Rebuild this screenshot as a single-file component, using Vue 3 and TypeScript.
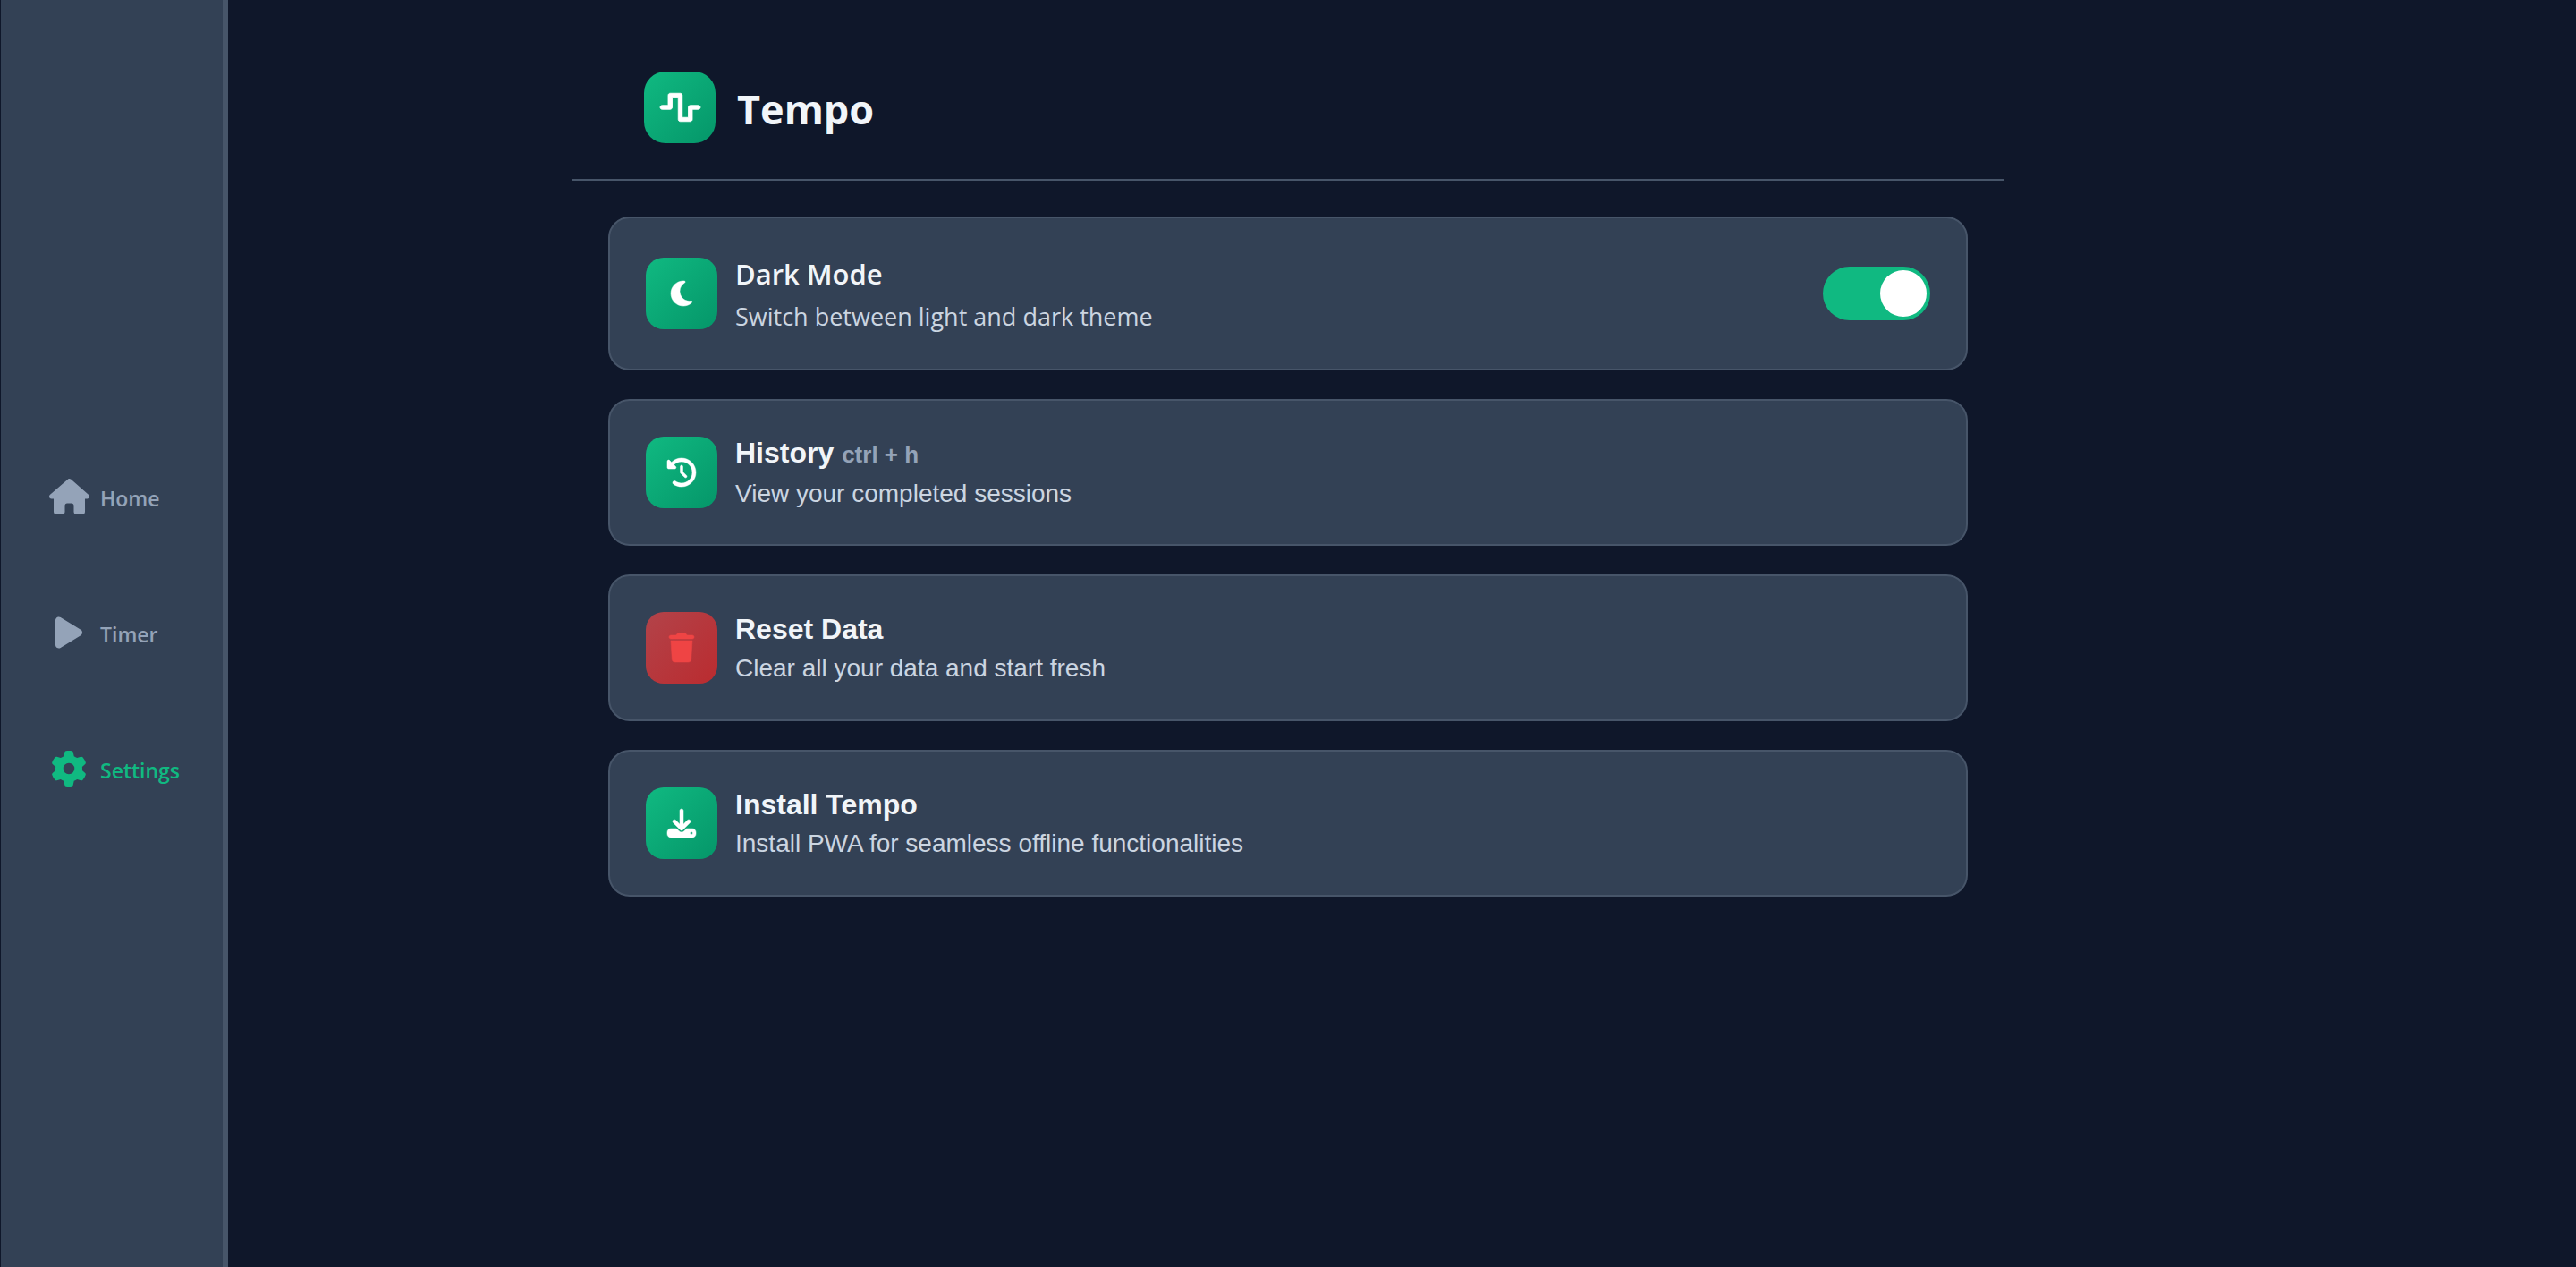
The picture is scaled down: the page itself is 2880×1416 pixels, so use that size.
<script setup lang="ts">
import { ref } from 'vue'

interface Icon {
  width: number
  path: string
}

const icons: Record<string, Icon> = {
  home: {
    width: 576,
    path: 'M575.8 255.5c0 18-15 32.1-32 32.1h-32l.7 160.2c0 2.7-.2 5.4-.5 8.1V472c0 22.1-17.9 40-40 40H456c-1.1 0-2.2 0-3.3-.1c-1.4 .1-2.8 .1-4.2 .1H416 392c-22.1 0-40-17.9-40-40V448 384c0-17.7-14.3-32-32-32H256c-17.7 0-32 14.3-32 32v64 24c0 22.1-17.9 40-40 40H160 128.1c-1.5 0-3-.1-4.5-.2c-1.2 .1-2.4 .2-3.6 .2H104c-22.1 0-40-17.9-40-40V360c0-.9 0-1.9 .1-2.8V287.6H32c-18 0-32-14-32-32.1c0-9 3-17 10-24L266.4 8c7-7 15-8 22-8s15 2 21 7L564.8 231.5c8 7 12 15 11 24z',
  },
  play: {
    width: 384,
    path: 'M73 39c-14.8-9.1-33.4-9.4-48.5-.9S0 62.6 0 80V432c0 17.4 9.4 33.4 24.5 41.9s33.7 8.1 48.5-.9L361 297c14.3-8.7 23-24.2 23-41s-8.7-32.2-23-41L73 39z',
  },
  gear: {
    width: 512,
    path: 'M495.9 166.6c3.2 8.7 .5 18.4-6.4 24.6l-43.3 39.4c1.1 8.3 1.7 16.8 1.7 25.4s-.6 17.1-1.7 25.4l43.3 39.4c6.9 6.2 9.6 15.9 6.4 24.6c-4.4 11.9-9.7 23.3-15.8 34.3l-4.7 8.1c-6.6 11-14 21.4-22.1 31.2c-5.9 7.2-15.7 9.6-24.5 6.8l-55.7-17.7c-13.4 10.3-28.2 18.9-44 25.4l-12.5 57.1c-2 9.1-9 16.3-18.2 17.8c-13.8 2.3-28 3.5-42.5 3.5s-28.7-1.2-42.5-3.5c-9.2-1.5-16.2-8.7-18.2-17.8l-12.5-57.1c-15.8-6.5-30.6-15.1-44-25.4L83.1 425.9c-8.8 2.8-18.6 .3-24.5-6.8c-8.1-9.8-15.5-20.2-22.1-31.2l-4.7-8.1c-6.1-11-11.4-22.4-15.8-34.3c-3.2-8.7-.5-18.4 6.4-24.6l43.3-39.4C64.6 273.1 64 264.6 64 256s.6-17.1 1.7-25.4L22.4 191.2c-6.9-6.2-9.6-15.9-6.4-24.6c4.4-11.9 9.7-23.3 15.8-34.3l4.7-8.1c6.6-11 14-21.4 22.1-31.2c5.9-7.2 15.7-9.6 24.5-6.8l55.7 17.7c13.4-10.3 28.2-18.9 44-25.4l12.5-57.1c2-9.1 9-16.3 18.2-17.8C227.3 1.2 241.5 0 256 0s28.7 1.2 42.5 3.5c9.2 1.5 16.2 8.7 18.2 17.8l12.5 57.1c15.8 6.5 30.6 15.1 44 25.4l55.7-17.7c8.8-2.8 18.6-.3 24.5 6.8c8.1 9.8 15.5 20.2 22.1 31.2l4.7 8.1c6.1 11 11.4 22.4 15.8 34.3zM256 336a80 80 0 1 0 0-160 80 80 0 1 0 0 160z',
  },
  wave: {
    width: 640,
    path: 'M128 64c0-17.7 14.3-32 32-32H320c17.7 0 32 14.3 32 32V416h96V256c0-17.7 14.3-32 32-32H608c17.7 0 32 14.3 32 32s-14.3 32-32 32H512V448c0 17.7-14.3 32-32 32H320c-17.7 0-32-14.3-32-32V96H192V256c0 17.7-14.3 32-32 32H32c-17.7 0-32-14.3-32-32s14.3-32 32-32h96V64z',
  },
  moon: {
    width: 384,
    path: 'M223.5 32C100 32 0 132.3 0 256S100 480 223.5 480c60.6 0 115.5-24.2 155.8-63.4c5-4.9 6.3-12.5 3.1-18.7s-10.1-9.7-17-8.5c-9.8 1.7-19.8 2.6-30.1 2.6c-96.9 0-175.5-78.8-175.5-176c0-65.8 36-123.1 89.3-153.3c6.1-3.5 9.2-10.5 7.7-17.3s-7.3-11.9-14.3-12.5c-6.3-.5-12.6-.8-19-.8z',
  },
  history: {
    width: 512,
    path: 'M75 75L41 41C25.9 25.9 0 36.6 0 57.9V168c0 13.3 10.7 24 24 24H134.1c21.4 0 32.1-25.9 17-41l-30.8-30.8C155 85.5 203 64 256 64c106 0 192 86 192 192s-86 192-192 192c-40.8 0-78.6-12.7-109.7-34.4c-14.5-10.1-34.4-6.6-44.6 7.9s-6.6 34.4 7.9 44.6C151.2 495 201.7 512 256 512c141.4 0 256-114.6 256-256S397.4 0 256 0C185.3 0 121.3 28.7 75 75zm181 53c-13.3 0-24 10.7-24 24V256c0 6.4 2.5 12.5 7 17l72 72c9.4 9.4 24.6 9.4 33.9 0s9.4-24.6 0-33.9l-65-65V152c0-13.3-10.7-24-24-24z',
  },
  trash: {
    width: 448,
    path: 'M135.2 17.7L128 32H32C14.3 32 0 46.3 0 64S14.3 96 32 96H416c17.7 0 32-14.3 32-32s-14.3-32-32-32H320l-7.2-14.3C307.4 6.8 296.3 0 284.2 0H163.8c-12.1 0-23.2 6.8-28.6 17.7zM416 128H32L53.2 467c1.6 25.3 22.6 45 47.9 45H346.9c25.3 0 46.3-19.7 47.9-45L416 128z',
  },
  download: {
    width: 512,
    path: 'M288 32c0-17.7-14.3-32-32-32s-32 14.3-32 32V274.7l-73.4-73.4c-12.5-12.5-32.8-12.5-45.3 0s-12.5 32.8 0 45.3l128 128c12.5 12.5 32.8 12.5 45.3 0l128-128c12.5-12.5 12.5-32.8 0-45.3s-32.8-12.5-45.3 0L288 274.7V32zM64 352c-35.3 0-64 28.7-64 64v32c0 35.3 28.7 64 64 64H448c35.3 0 64-28.7 64-64V416c0-35.3-28.7-64-64-64H346.5l-45.3 45.3c-25 25-65.5 25-90.5 0L165.5 352H64zm368 56a24 24 0 1 1 0 48 24 24 0 1 1 0-48z',
  },
}

const navItems = [
  { label: 'Home', icon: 'home', active: false },
  { label: 'Timer', icon: 'play', active: false },
  { label: 'Settings', icon: 'gear', active: true },
]

const actions = [
  { title: 'History', hint: 'ctrl + h', text: 'View your completed sessions', icon: 'history', danger: false },
  { title: 'Reset Data', hint: '', text: 'Clear all your data and start fresh', icon: 'trash', danger: true },
  { title: 'Install Tempo', hint: '', text: 'Install PWA for seamless offline functionalities', icon: 'download', danger: false },
]

const darkMode = ref(true)
</script>

<template>
  <div class="app">
    <nav class="sidebar">
      <a v-for="item in navItems" :key="item.label" href="#" class="nav-link" :class="{ active: item.active }">
        <span class="nav-icon">
          <svg :viewBox="`0 0 ${icons[item.icon].width} 512`" aria-hidden="true">
            <path :d="icons[item.icon].path" />
          </svg>
        </span>
        <span class="nav-label">{{ item.label }}</span>
      </a>
    </nav>

    <main class="page">
      <header class="header">
        <span class="tile logo">
          <svg :viewBox="`0 0 ${icons.wave.width} 512`" aria-hidden="true"><path :d="icons.wave.path" /></svg>
        </span>
        <h1>Tempo</h1>
      </header>

      <section class="cards">
        <div class="card">
          <span class="tile">
            <svg :viewBox="`0 0 ${icons.moon.width} 512`" aria-hidden="true"><path :d="icons.moon.path" /></svg>
          </span>
          <label class="info" for="dark-mode">
            <span class="title">Dark Mode</span>
            <span class="text">Switch between light and dark theme</span>
          </label>
          <input id="dark-mode" v-model="darkMode" class="toggle" type="checkbox" role="switch" />
        </div>

        <button v-for="action in actions" :key="action.title" type="button" class="card">
          <span class="tile" :class="{ danger: action.danger }">
            <svg :viewBox="`0 0 ${icons[action.icon].width} 512`" aria-hidden="true">
              <path :d="icons[action.icon].path" />
            </svg>
          </span>
          <span class="info">
            <span class="title">{{ action.title }}&nbsp;<span v-if="action.hint" class="hint">{{ action.hint }}</span></span>
            <span class="text">{{ action.text }}</span>
          </span>
        </button>
      </section>
    </main>
  </div>
</template>

<style>
body {
  background: #0f172a;
}
</style>

<style scoped>
.app {
  min-height: 100vh;
  background: #0f172a;
  color: #f1f5f9;
  font-family: "Segoe UI", "Open Sans", "Noto Sans", sans-serif;
}

.app * {
  box-sizing: border-box;
}

svg {
  display: block;
  height: 32px;
  overflow: visible;
  fill: currentColor;
}

.sidebar {
  position: fixed;
  top: 0;
  bottom: 0;
  left: 0;
  width: 255px;
  display: flex;
  flex-direction: column;
  justify-content: center;
  gap: 96px;
  padding: 0 0 2px 53px;
  background: #334155;
  border-left: 1px solid #0f172a;
  border-right: 6px solid #475569;
}

.nav-link {
  display: flex;
  align-items: center;
  gap: 12px;
  height: 56px;
  color: #94a3b8;
  font-size: 23px;
  font-weight: 600;
  line-height: 32px;
  text-decoration: none;
}

.nav-link.active {
  color: #10b981;
}

.nav-icon {
  width: 46px;
  display: flex;
  justify-content: center;
}

.nav-icon svg {
  height: 40px;
}

.nav-label {
  padding-top: 4px;
}

.page {
  max-width: 1600px;
  margin: 0 auto;
  padding-top: 40px;
}

.header {
  display: flex;
  align-items: center;
  gap: 24px;
  padding: 40px 80px;
  border-bottom: 2px solid #475569;
}

h1 {
  margin: 0;
  padding-top: 4px;
  font-size: 45px;
  font-weight: 700;
  line-height: 64px;
}

.tile {
  flex: none;
  display: flex;
  align-items: center;
  justify-content: center;
  width: 80px;
  height: 80px;
  border-radius: 20px;
  background: linear-gradient(135deg, #10b981, #059669);
  color: #ffffff;
}

.tile path {
  stroke: currentColor;
  stroke-width: 8;
}

.tile.logo {
  border-radius: 24px;
}

.logo svg {
  height: 36px;
}

.logo path {
  stroke-width: 12;
}

.tile.danger {
  background: linear-gradient(135deg, rgba(239, 68, 68, 0.68), rgba(220, 38, 38, 0.8));
  color: #ef4444;
}

.cards {
  display: flex;
  flex-direction: column;
  gap: 32px;
  padding: 40px;
}

.card {
  display: flex;
  align-items: center;
  gap: 20px;
  width: 100%;
  padding: 40px;
  border: 2px solid #475569;
  border-radius: 24px;
  background: #334155;
  color: inherit;
  text-align: left;
}

.info {
  flex: 1;
  display: flex;
  flex-direction: column;
  gap: 6px;
}

.title {
  font-size: 31px;
  font-weight: 600;
  line-height: 45px;
}

.text {
  color: #cbd5e1;
  font-size: 27px;
  line-height: 37px;
}

button.card {
  font-family: Arial, "Liberation Sans", sans-serif;
  cursor: pointer;
}

button.card .info {
  gap: 10px;
}

button.card .title {
  font-size: 32px;
  line-height: 36px;
}

button.card .text {
  font-size: 28px;
  line-height: 32px;
}

button.card .hint {
  color: #94a3b8;
  font-size: 26px;
}

.toggle {
  appearance: none;
  display: flex;
  align-items: center;
  width: 120px;
  height: 60px;
  margin: 0;
  padding: 4px;
  border-radius: 30px;
  background: #475569;
  cursor: pointer;
}

.toggle::before {
  content: "";
  width: 52px;
  height: 52px;
  border-radius: 50%;
  background: #ffffff;
}

.toggle:checked {
  justify-content: flex-end;
  background: #10b981;
}
</style>
